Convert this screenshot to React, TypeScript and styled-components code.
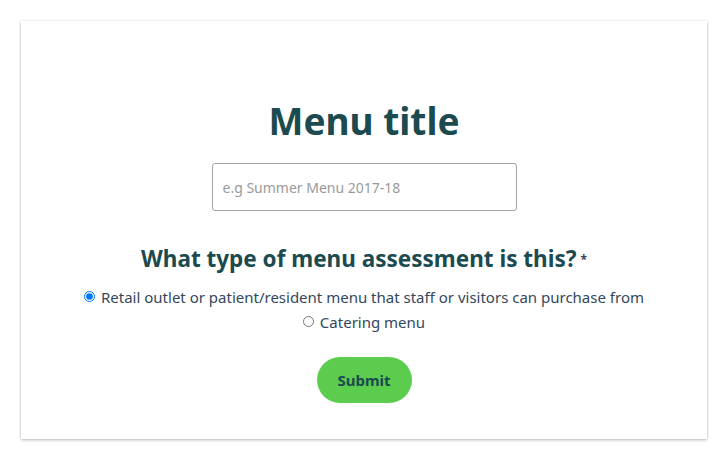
import React from "react";
import styled, { createGlobalStyle } from "styled-components";

const Global = createGlobalStyle`
  html, body { margin: 0; padding: 0; background: #ffffff; }
  body { font-family: "Noto Sans", "Open Sans", sans-serif; color: #33475b; }
  * { box-sizing: border-box; }
`;

const Page = styled.div`
  padding: 21px 19px 21px 21px;
`;

const Card = styled.form`
  width: 686px;
  height: 418px;
  background: #fff;
  box-shadow: 0 1px 3px rgba(0, 0, 0, 0.28), 0 0 1px rgba(0, 0, 0, 0.12);
  display: flex;
  flex-direction: column;
  align-items: center;
  padding-top: 76px;
`;

const Title = styled.h1`
  margin: 0;
  font-size: 37px;
  line-height: 48px;
  font-weight: 700;
  color: #1b4a4f;
`;

const Input = styled.input`
  margin-top: 18px;
  width: 305px;
  height: 48px;
  border: 1px solid #a3a3a3;
  border-radius: 3px;
  padding: 0 10px;
  font-family: inherit;
  font-size: 14px;
  color: #33475b;
  &::placeholder { color: #9a9a9a; }
`;

const Question = styled.h2`
  margin: 32px 0 0;
  font-size: 22.5px;
  line-height: 30px;
  font-weight: 700;
  color: #1b4a4f;
  display: flex;
  align-items: center;
`;

const Asterisk = styled.span`
  font-size: 12px;
  color: #33475b;
  margin-left: 4px;
  margin-top: 2px;
`;

const Options = styled.div`
  margin-top: 12px;
  display: flex;
  flex-direction: column;
  align-items: center;
  gap: 4px;
`;

const Option = styled.label`
  display: flex;
  align-items: center;
  font-size: 15px;
  line-height: 21px;
  color: #33475b;
`;

const Radio = styled.input`
  margin: 0 6px 2px 0;
  width: 11px;
  height: 11px;
`;

const Submit = styled.button`
  margin-top: 24px;
  width: 95px;
  height: 46px;
  border: none;
  border-radius: 23px;
  background: #5ccc4f;
  color: #1b4a4f;
  font-family: inherit;
  font-weight: 700;
  font-size: 15px;
`;

export default function App() {
  return (
    <Page>
      <Global />
      <Card onSubmit={(e) => e.preventDefault()}>
        <Title>Menu title</Title>
        <Input placeholder="e.g Summer Menu 2017-18" />
        <Question>
          What type of menu assessment is this?<Asterisk>*</Asterisk>
        </Question>
        <Options>
          <Option>
            <Radio type="radio" name="type" defaultChecked />
            Retail outlet or patient/resident menu that staff or visitors can purchase from
          </Option>
          <Option>
            <Radio type="radio" name="type" />
            Catering menu
          </Option>
        </Options>
        <Submit type="submit">Submit</Submit>
      </Card>
    </Page>
  );
}
